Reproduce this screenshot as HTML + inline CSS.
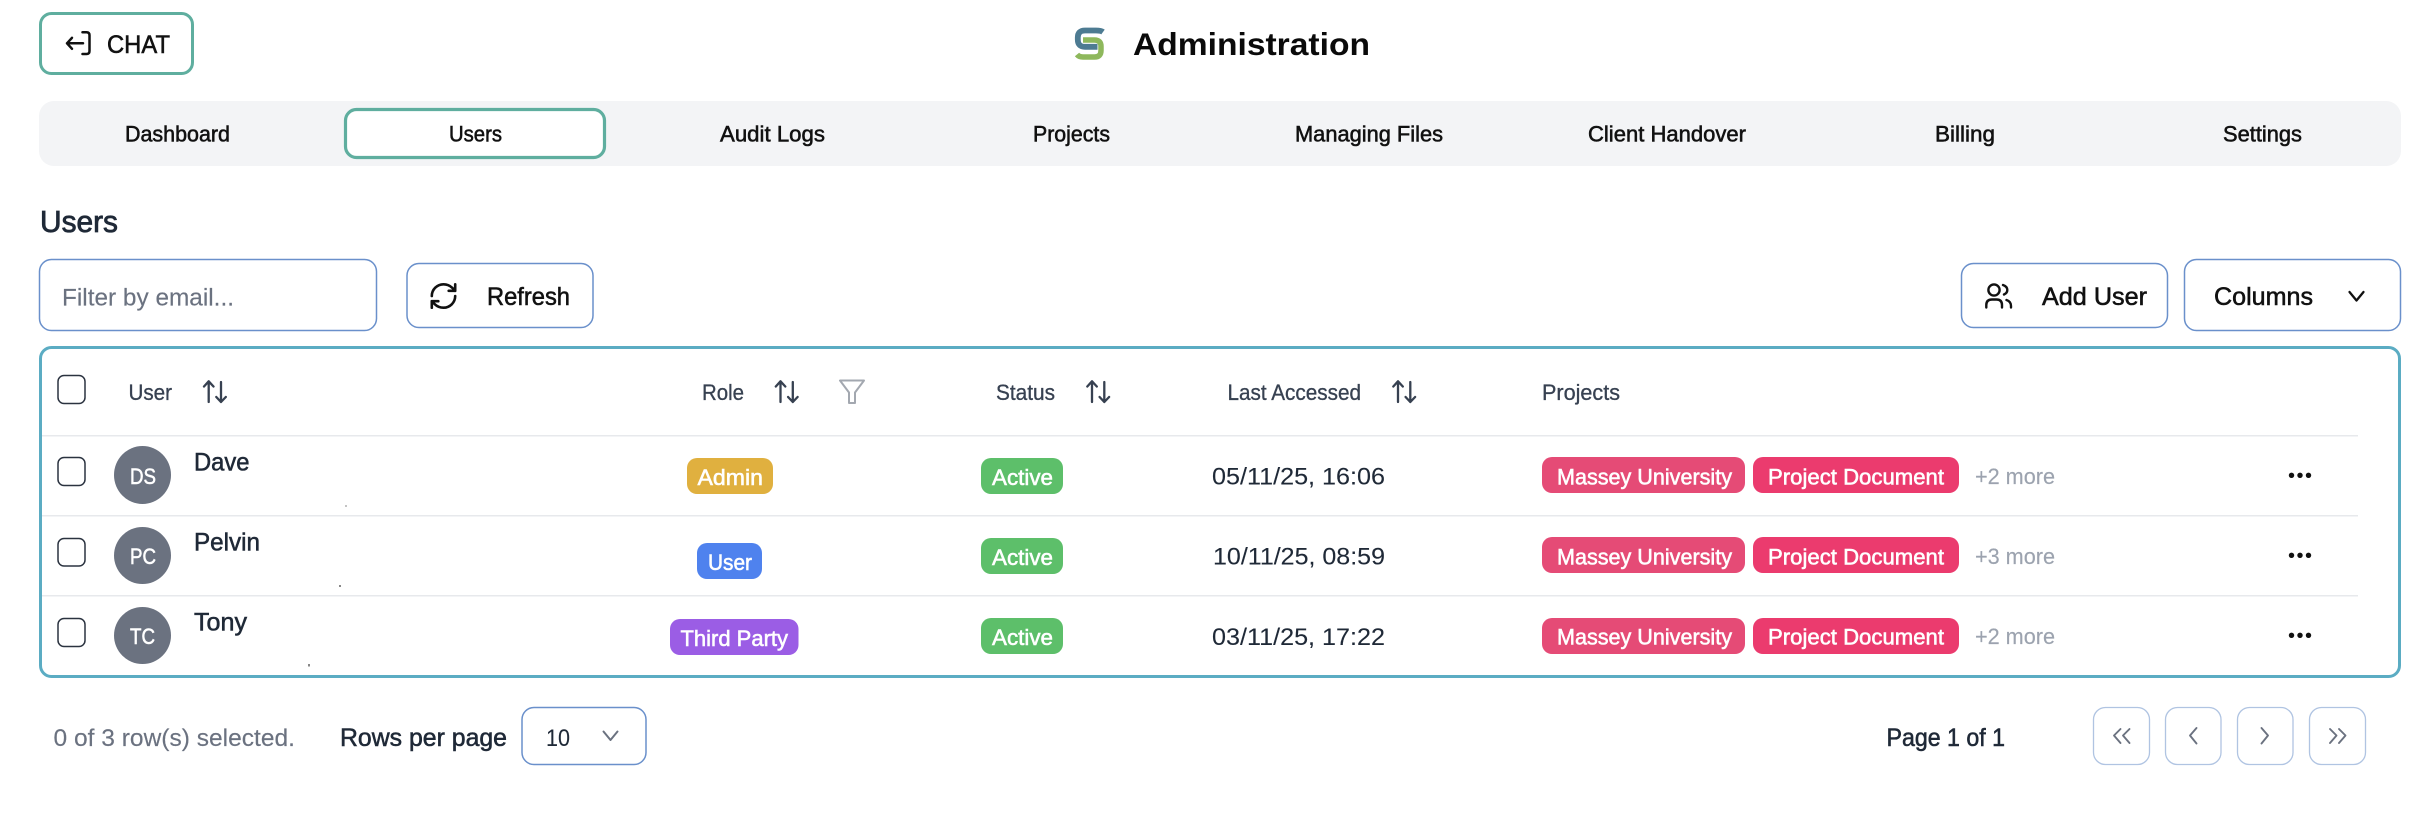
<!DOCTYPE html>
<html lang="en">
<head>
<meta charset="utf-8">
<title>Administration</title>
<style>
html,body{margin:0;padding:0;background:#fff;width:2432px;height:820px;overflow:hidden}
svg{display:block;filter:blur(.3px)}
text{font-family:"Liberation Sans",Arial,sans-serif;white-space:pre}
.m{stroke-width:.55px}
.nav{font-size:22px;fill:#111;stroke:#111}
.btn{font-size:25px;fill:#111;stroke:#111}
.hd{font-size:22px;fill:#374151;stroke:#374151;stroke-width:.3px}
.name{font-size:25px;fill:#1f2937;stroke:#1f2937}
.av{font-size:22px;fill:#fff;stroke:#fff}
.bd{font-size:22px;fill:#fff;stroke:#fff}
.dt{font-size:24.5px;fill:#1f2937;stroke:#1f2937;stroke-width:.1px}
.more{font-size:22px;fill:#9ca3af;stroke:#9ca3af;stroke-width:.15px}
.muted{font-size:24.5px;fill:#6b7280;stroke:#6b7280;stroke-width:.15px}
.ft{font-size:25px;fill:#1f2937;stroke:#1f2937}
.ic{fill:none;stroke-linecap:round;stroke-linejoin:round}
</style>
</head>
<body>
<svg xmlns="http://www.w3.org/2000/svg" width="2432" height="820" viewBox="0 0 2432 820">
<rect width="2432" height="820" fill="#fff"/>

<!-- back to chat -->
<rect x="40.500" y="13.500" width="152" height="60" rx="11" fill="#fff" stroke="#5fae9f" stroke-width="3"/>
<g class="ic" stroke="#111" stroke-width="2.500">
<path d="M83 43.300H67M72 37.800L67 43.300L72 48.800"/>
<path d="M82.500 32.300H86.500Q89.500 32.300 89.500 35.300V51Q89.500 54 86.500 54H82.500"/>
</g>
<text x="107" y="53" textLength="63" lengthAdjust="spacingAndGlyphs" class="btn m">CHAT</text>

<!-- logo + title -->
<g fill="none">
<path d="M1083 40H1094.500Q1101 40 1101 46.500V50.500Q1101 57 1094.500 57H1083Q1079 57 1077 54.500" stroke="#8eb85c" stroke-width="5.500"/>
<path d="M1103 32Q1101 30.500 1096 30.500H1085Q1077.800 30.500 1077.800 37.500V39.500Q1077.800 46.800 1085 46.800H1097.500" stroke="#4d7b92" stroke-width="5.800"/>
</g>
<text x="1133" y="55" textLength="237" lengthAdjust="spacingAndGlyphs" font-size="31.500" font-weight="700" fill="#0a0a0a">Administration</text>

<!-- tabs -->
<rect x="39" y="101" width="2362" height="65" rx="15" fill="#f3f4f6"/>
<rect x="345.500" y="109.500" width="259" height="48" rx="11" fill="#fff" stroke="#5fae9f" stroke-width="3.200"/>
<text x="125" y="141.500" textLength="105" lengthAdjust="spacingAndGlyphs" class="nav m">Dashboard</text>
<text x="449" y="141.500" textLength="53" lengthAdjust="spacingAndGlyphs" class="nav m">Users</text>
<text x="720" y="141.500" textLength="105" lengthAdjust="spacingAndGlyphs" class="nav m">Audit Logs</text>
<text x="1033" y="141.500" textLength="77" lengthAdjust="spacingAndGlyphs" class="nav m">Projects</text>
<text x="1295" y="141.500" textLength="148" lengthAdjust="spacingAndGlyphs" class="nav m">Managing Files</text>
<text x="1588" y="141.500" textLength="158" lengthAdjust="spacingAndGlyphs" class="nav m">Client Handover</text>
<text x="1935" y="141.500" textLength="60" lengthAdjust="spacingAndGlyphs" class="nav m">Billing</text>
<text x="2223" y="141.500" textLength="79" lengthAdjust="spacingAndGlyphs" class="nav m">Settings</text>

<!-- heading -->
<text x="40" y="232" textLength="78" lengthAdjust="spacingAndGlyphs" font-size="30.500" fill="#1f2937" stroke="#1f2937" stroke-width=".8">Users</text>

<!-- toolbar -->
<rect x="39.500" y="259.500" width="337" height="71" rx="12" fill="#fff" stroke="#6a90cb" stroke-width="1.500"/>
<text x="62" y="305.500" textLength="172" lengthAdjust="spacingAndGlyphs" class="muted">Filter by email...</text>

<rect x="407" y="263.500" width="186" height="64" rx="12" fill="#fff" stroke="#6a90cb" stroke-width="1.500"/>
<g transform="translate(427.900 280.400) scale(1.3)" class="ic" stroke="#111" stroke-width="2">
<path d="M3 12a9 9 0 0 1 9-9 9.750 9.750 0 0 1 6.740 2.740L21 8"/>
<path d="M21 3v5h-5"/>
<path d="M21 12a9 9 0 0 1-9 9 9.750 9.750 0 0 1-6.740-2.740L3 16"/>
<path d="M8 16H3v5"/>
</g>
<text x="487" y="305" textLength="83" lengthAdjust="spacingAndGlyphs" class="btn m">Refresh</text>

<rect x="1961.500" y="263.500" width="206" height="64" rx="12" fill="#fff" stroke="#6a90cb" stroke-width="1.500"/>
<g class="ic" stroke="#111" stroke-width="2.400">
<circle cx="1994" cy="290" r="5.600"/>
<path d="M1986.300 307.500V305Q1986.300 299.500 1992 299.500H1996.500Q2002 299.500 2002 305V307.500"/>
<path d="M2003 285Q2007.300 286.500 2007.300 290Q2007.300 293 2004 294.500"/>
<path d="M2006.500 300Q2011 301.500 2011 306V307.500"/>
</g>
<text x="2042" y="305" textLength="105" lengthAdjust="spacingAndGlyphs" class="btn m">Add User</text>

<rect x="2184.500" y="259.500" width="216" height="71" rx="12" fill="#fff" stroke="#6a90cb" stroke-width="1.500"/>
<text x="2214" y="305" textLength="99" lengthAdjust="spacingAndGlyphs" class="btn m">Columns</text>
<path d="M2349.500 292L2356.500 300.500L2363.500 292" class="ic" stroke="#111" stroke-width="2.300"/>

<!-- table -->
<rect x="40.500" y="347.500" width="2359" height="329" rx="11" fill="#fff" stroke="#5bacc3" stroke-width="3"/>
<rect x="42" y="435" width="2316" height="1.500" fill="#e7e9ec"/>
<rect x="42" y="515" width="2316" height="1.500" fill="#e7e9ec"/>
<rect x="42" y="595" width="2316" height="1.500" fill="#e7e9ec"/>

<!-- checkboxes -->
<g fill="#fff" stroke="#2b3340" stroke-width="1.500">
<rect x="58" y="375.500" width="27" height="28" rx="6"/>
<rect x="58" y="457.500" width="27" height="28" rx="6"/>
<rect x="58" y="538.500" width="27" height="27.500" rx="6"/>
<rect x="58" y="618.500" width="27" height="28" rx="6"/>
</g>

<!-- header -->
<text x="128.500" y="400" textLength="43.500" lengthAdjust="spacingAndGlyphs" class="hd">User</text>
<text x="702" y="400" textLength="42" lengthAdjust="spacingAndGlyphs" class="hd">Role</text>
<text x="996" y="400" textLength="59" lengthAdjust="spacingAndGlyphs" class="hd">Status</text>
<text x="1227.500" y="400" textLength="133.500" lengthAdjust="spacingAndGlyphs" class="hd">Last Accessed</text>
<text x="1542" y="400" textLength="78" lengthAdjust="spacingAndGlyphs" class="hd">Projects</text>

<g class="ic" stroke="#374151" stroke-width="2.300">
<path d="M208.700 402V381.300M204 386.500L208.700 381.300L213.500 386.500M221 382V402M216.300 397L221 402L225.800 397"/>
<path transform="translate(571.800 0)" d="M208.700 402V381.300M204 386.500L208.700 381.300L213.500 386.500M221 382V402M216.300 397L221 402L225.800 397"/>
<path transform="translate(883.300 0)" d="M208.700 402V381.300M204 386.500L208.700 381.300L213.500 386.500M221 382V402M216.300 397L221 402L225.800 397"/>
<path transform="translate(1189.300 0)" d="M208.700 402V381.300M204 386.500L208.700 381.300L213.500 386.500M221 382V402M216.300 397L221 402L225.800 397"/>
</g>
<path d="M840 380.500H864L855 392.500V403H849V392.500Z" class="ic" stroke="#a3a8b0" stroke-width="2"/>

<!-- avatars -->
<g fill="#6b7280">
<ellipse cx="142.500" cy="475" rx="28.500" ry="29"/>
<ellipse cx="142.500" cy="555.500" rx="28.500" ry="28.500"/>
<ellipse cx="142.500" cy="635.500" rx="28.500" ry="28.500"/>
</g>
<text x="130" y="484" textLength="26" lengthAdjust="spacingAndGlyphs" class="av m">DS</text>
<text x="130" y="564" textLength="26" lengthAdjust="spacingAndGlyphs" class="av m">PC</text>
<text x="130" y="644" textLength="25" lengthAdjust="spacingAndGlyphs" class="av m">TC</text>

<text x="194" y="470.700" textLength="55.500" lengthAdjust="spacingAndGlyphs" class="name m">Dave</text>
<text x="194" y="550.700" textLength="66" lengthAdjust="spacingAndGlyphs" class="name m">Pelvin</text>
<text x="194" y="630.700" textLength="53" lengthAdjust="spacingAndGlyphs" class="name m">Tony</text>
<g fill="#888">
<rect x="345" y="505.500" width="2" height="1"/>
<rect x="339" y="585" width="2" height="2"/>
<rect x="308" y="664" width="2" height="2.500"/>
</g>

<!-- role badges -->
<rect x="687" y="458" width="86" height="36" rx="10" fill="#e0b03f"/>
<text x="697.500" y="485" textLength="65.500" lengthAdjust="spacingAndGlyphs" class="bd m">Admin</text>
<rect x="697" y="543" width="65" height="36" rx="10" fill="#4f82ee"/>
<text x="708" y="570" textLength="44" lengthAdjust="spacingAndGlyphs" class="bd m">User</text>
<rect x="670" y="619" width="128.500" height="36" rx="10" fill="#9b5de5"/>
<text x="680.500" y="646" textLength="107.500" lengthAdjust="spacingAndGlyphs" class="bd m">Third Party</text>

<!-- status badges -->
<g fill="#5dbf6a">
<rect x="981" y="458" width="82" height="36" rx="10"/>
<rect x="981" y="538" width="82" height="36" rx="10"/>
<rect x="981" y="618" width="82" height="36" rx="10"/>
</g>
<text x="992" y="485" textLength="61" lengthAdjust="spacingAndGlyphs" class="bd m">Active</text>
<text x="992" y="565" textLength="61" lengthAdjust="spacingAndGlyphs" class="bd m">Active</text>
<text x="992" y="645" textLength="61" lengthAdjust="spacingAndGlyphs" class="bd m">Active</text>

<!-- dates -->
<text x="1212" y="484.700" textLength="173" lengthAdjust="spacingAndGlyphs" class="dt">05/11/25, 16:06</text>
<text x="1213" y="564.700" textLength="172" lengthAdjust="spacingAndGlyphs" class="dt">10/11/25, 08:59</text>
<text x="1212" y="645" textLength="173" lengthAdjust="spacingAndGlyphs" class="dt">03/11/25, 17:22</text>

<!-- project badges -->
<g fill="#e54b76">
<rect x="1542" y="457" width="203" height="36" rx="10"/>
<rect x="1542" y="537" width="203" height="36" rx="10"/>
<rect x="1542" y="618" width="203" height="36" rx="10"/>
</g>
<g fill="#eb3b6e">
<rect x="1753" y="457" width="206" height="36" rx="10"/>
<rect x="1753" y="537" width="206" height="36" rx="10"/>
<rect x="1753" y="618" width="206" height="36" rx="10"/>
</g>
<text x="1557" y="484.300" textLength="175" lengthAdjust="spacingAndGlyphs" class="bd m">Massey University</text>
<text x="1768" y="484.300" textLength="176" lengthAdjust="spacingAndGlyphs" class="bd m">Project Document</text>
<text x="1975" y="484" textLength="80" lengthAdjust="spacingAndGlyphs" class="more">+2 more</text>
<text x="1557" y="564.300" textLength="175" lengthAdjust="spacingAndGlyphs" class="bd m">Massey University</text>
<text x="1768" y="564.300" textLength="176" lengthAdjust="spacingAndGlyphs" class="bd m">Project Document</text>
<text x="1975" y="564" textLength="80" lengthAdjust="spacingAndGlyphs" class="more">+3 more</text>
<text x="1557" y="644.500" textLength="175" lengthAdjust="spacingAndGlyphs" class="bd m">Massey University</text>
<text x="1768" y="644.500" textLength="176" lengthAdjust="spacingAndGlyphs" class="bd m">Project Document</text>
<text x="1975" y="644" textLength="80" lengthAdjust="spacingAndGlyphs" class="more">+2 more</text>

<!-- row menus -->
<g fill="#111">
<circle cx="2291.500" cy="475.300" r="2.700"/><circle cx="2300" cy="475.300" r="2.700"/><circle cx="2308.500" cy="475.300" r="2.700"/>
<circle cx="2291.500" cy="555.300" r="2.700"/><circle cx="2300" cy="555.300" r="2.700"/><circle cx="2308.500" cy="555.300" r="2.700"/>
<circle cx="2291.500" cy="635.300" r="2.700"/><circle cx="2300" cy="635.300" r="2.700"/><circle cx="2308.500" cy="635.300" r="2.700"/>
</g>

<!-- footer -->
<text x="53.500" y="746" textLength="241.500" lengthAdjust="spacingAndGlyphs" class="muted">0 of 3 row(s) selected.</text>
<text x="340" y="746" textLength="167" lengthAdjust="spacingAndGlyphs" class="ft m">Rows per page</text>
<rect x="522" y="707.500" width="124" height="57" rx="12" fill="#fff" stroke="#6a90cb" stroke-width="1.500"/>
<text x="546" y="746" textLength="24" lengthAdjust="spacingAndGlyphs" class="dt">10</text>
<path d="M603.500 731.500L610.500 740L617.500 731.500" class="ic" stroke="#6b7280" stroke-width="2"/>
<text x="1886.500" y="746" textLength="118.500" lengthAdjust="spacingAndGlyphs" class="ft m">Page 1 of 1</text>

<g fill="#fff" stroke="#b0c4e2" stroke-width="1.300">
<rect x="2093.500" y="707.500" width="56" height="57" rx="12"/>
<rect x="2165.500" y="707.500" width="55.500" height="57" rx="12"/>
<rect x="2237.500" y="707.500" width="55.500" height="57" rx="12"/>
<rect x="2309.500" y="707.500" width="56" height="57" rx="12"/>
</g>
<g class="ic" stroke="#6b7280" stroke-width="1.900">
<path d="M2120.500 729L2114 735.500L2120.500 743M2129.500 729L2123 735.500L2129.500 743"/>
<path d="M2196.500 728L2190 735.500L2196.500 743.500"/>
<path d="M2261.500 728L2268 735.500L2261.500 743.500"/>
<path d="M2330 729L2336.500 735.500L2330 743M2339 729L2345.500 735.500L2339 743"/>
</g>
</svg>
</body>
</html>
